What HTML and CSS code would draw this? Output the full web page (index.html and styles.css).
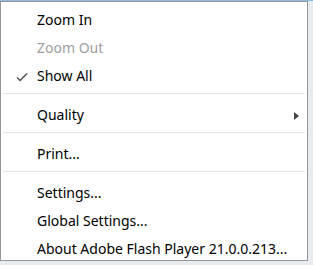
FILE: index.html
```html
<!DOCTYPE html>
<html lang="en">
<head>
  <meta charset="UTF-8">
  <title>Flash Player menu</title>
  <link rel="stylesheet" href="styles.css">
</head>
<body>
  <div class="menu">
    <div class="item">Zoom In</div>
    <div class="item disabled">Zoom Out</div>
    <div class="item">
      <svg class="check" width="12" height="10" viewBox="0 0 12 10">
        <path d="M1 5.5 L4.2 8.5 L11 1.5" fill="none" stroke="#555" stroke-width="1.6"/>
      </svg>
      Show All
    </div>
    <div class="sep"></div>
    <div class="item">
      Quality
      <svg class="arrow" width="5" height="8" viewBox="0 0 5 8">
        <path d="M0 0 L5 4 L0 8 Z" fill="#444"/>
      </svg>
    </div>
    <div class="sep"></div>
    <div class="item">Print...</div>
    <div class="sep"></div>
    <div class="item">Settings...</div>
    <div class="item">Global Settings...</div>
    <div class="item">About Adobe Flash Player 21.0.0.213...</div>
  </div>
</body>
</html>
```

FILE: styles.css
```css
body {
  margin: 0;
  background-color: #e9ecee;
  border-top: 1px solid #8fb8e0;
  font-family: "Noto Sans", "Open Sans", sans-serif;
  overflow: hidden;
}
.menu {
  width: 308px;
  height: 260px;
  background-color: white;
  border: 1px solid #979797;
  box-sizing: border-box;
  padding: 4px 2px 0 2px;
  overflow: hidden;
}
.item {
  position: relative;
  height: 28px;
  line-height: 28px;
  padding-left: 34px;
  font-size: 14px;
  color: #000;
  white-space: nowrap;
}
.disabled {
  color: #a0a0a0;
}
.check {
  position: absolute;
  left: 13px;
  top: 10px;
}
.arrow {
  position: absolute;
  right: 6px;
  top: 11px;
}
.sep {
  height: 1px;
  background-color: #e3e3e3;
  margin: 3px 0 7px 0;
}
```
